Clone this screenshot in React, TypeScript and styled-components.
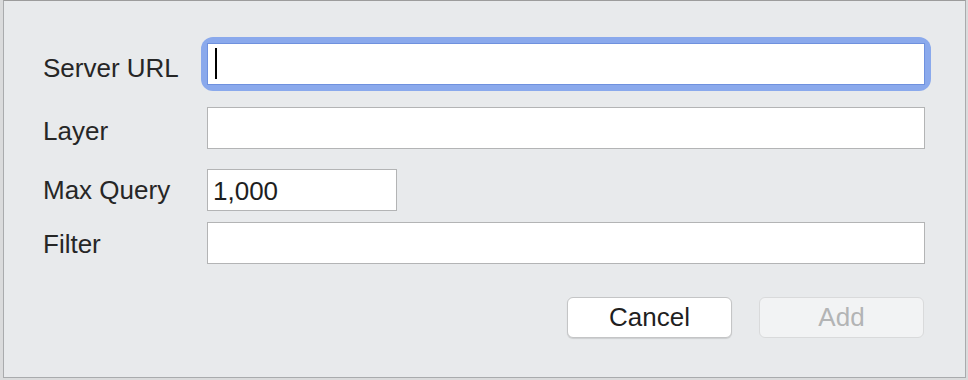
import * as React from 'react'
import styled, { createGlobalStyle } from 'styled-components'

const GlobalStyle = createGlobalStyle`
  html, body {
    margin: 0;
    padding: 0;
    background: #d6d7d9;
    font-family: "Liberation Sans", Arial, sans-serif;
  }
`

const Screen = styled.div`
  width: 968px;
  height: 380px;
  padding-left: 3px;
  box-sizing: border-box;
  background: #dadbdc;
  overflow: hidden;
`

const Dialog = styled.div`
  width: 963px;
  height: 378px;
  box-sizing: border-box;
  border: 1px solid #a9abad;
  border-top-color: #9c9c9c;
  background: #e8eaec;
  padding: 42px 40px 0 39px;
  color: #262626;
`

const Row = styled.div<{ $gap: number }>`
  display: flex;
  align-items: center;
  height: 42px;
  margin-top: ${(p) => p.$gap}px;
`

const Label = styled.label<{ $shift?: number }>`
  width: 164px;
  flex: none;
  font-size: 26px;
  line-height: 1;
  padding-top: ${(p) => p.$shift ?? 0}px;
`

const TextInput = styled.input<{ $width?: number }>`
  box-sizing: border-box;
  height: 42px;
  width: ${(p) => (p.$width ? `${p.$width}px` : '100%')};
  flex: ${(p) => (p.$width ? 'none' : '1')};
  border: 1px solid #b3b4b5;
  background: #ffffff;
  padding: 3px 5px 0;
  font-family: inherit;
  font-size: 26px;
  color: #1e1e1e;
  outline: none;
  margin: 0;
`

const FocusWrap = styled.div`
  position: relative;
  flex: 1;
  display: flex;
  border-radius: 6px;
  box-shadow: 0 0 0 6px #8aa9ec;

  ${TextInput} {
    border-color: #6f91de;
  }
`

const Caret = styled.span`
  position: absolute;
  left: 8px;
  top: 5px;
  width: 2px;
  height: 31px;
  background: #000;
`

const Actions = styled.div`
  display: flex;
  justify-content: flex-end;
  gap: 27px;
  margin-top: 33px;
  padding-right: 1px;
`

const Button = styled.button<{ $disabled?: boolean }>`
  box-sizing: border-box;
  width: 165px;
  height: 41px;
  border-radius: 6px;
  border: 1px solid ${(p) => (p.$disabled ? '#d9dadb' : '#c4c5c6')};
  background: ${(p) => (p.$disabled ? '#f2f3f4' : '#ffffff')};
  color: ${(p) => (p.$disabled ? '#b3b4b5' : '#1f1f1f')};
  box-shadow: ${(p) => (p.$disabled ? 'none' : '0 1px 1px rgba(0,0,0,0.12)')};
  font-family: inherit;
  font-size: 26px;
  padding: 0;
  cursor: default;
`

export default function App() {
  return (
    <Screen>
      <GlobalStyle />
      <Dialog>
        <Row $gap={0}>
          <Label $shift={7}>Server URL</Label>
          <FocusWrap>
            <TextInput readOnly defaultValue="" />
            <Caret />
          </FocusWrap>
        </Row>
        <Row $gap={22}>
          <Label $shift={5}>Layer</Label>
          <TextInput readOnly defaultValue="" />
        </Row>
        <Row $gap={20}>
          <Label>Max Query</Label>
          <TextInput readOnly $width={190} defaultValue="1,000" />
        </Row>
        <Row $gap={11}>
          <Label $shift={2}>Filter</Label>
          <TextInput readOnly defaultValue="" />
        </Row>
        <Actions>
          <Button>Cancel</Button>
          <Button $disabled disabled>
            Add
          </Button>
        </Actions>
      </Dialog>
    </Screen>
  )
}
